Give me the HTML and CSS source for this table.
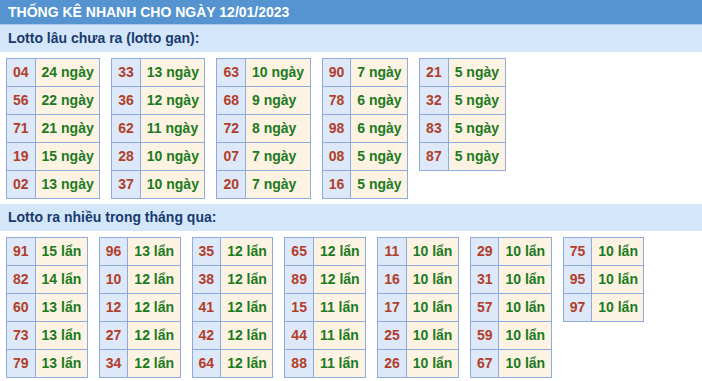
FILE: index.html
```html
<!DOCTYPE html>
<html lang="vi">
<head>
<meta charset="utf-8">
<link rel="stylesheet" href="styles.css">
</head>
<body>
<div class="title">THỐNG KÊ NHANH CHO NGÀY 12/01/2023</div>
<div class="band">Lotto lâu chưa ra (lotto gan):</div>
<div class="tables first">
  <table><tr><td class="n">04</td><td class="v">24 ngày</td></tr><tr><td class="n">56</td><td class="v">22 ngày</td></tr><tr><td class="n">71</td><td class="v">21 ngày</td></tr><tr><td class="n">19</td><td class="v">15 ngày</td></tr><tr><td class="n">02</td><td class="v">13 ngày</td></tr></table>
  <table><tr><td class="n">33</td><td class="v">13 ngày</td></tr><tr><td class="n">36</td><td class="v">12 ngày</td></tr><tr><td class="n">62</td><td class="v">11 ngày</td></tr><tr><td class="n">28</td><td class="v">10 ngày</td></tr><tr><td class="n">37</td><td class="v">10 ngày</td></tr></table>
  <table><tr><td class="n">63</td><td class="v">10 ngày</td></tr><tr><td class="n">68</td><td class="v">9 ngày</td></tr><tr><td class="n">72</td><td class="v">8 ngày</td></tr><tr><td class="n">07</td><td class="v">7 ngày</td></tr><tr><td class="n">20</td><td class="v">7 ngày</td></tr></table>
  <table><tr><td class="n">90</td><td class="v">7 ngày</td></tr><tr><td class="n">78</td><td class="v">6 ngày</td></tr><tr><td class="n">98</td><td class="v">6 ngày</td></tr><tr><td class="n">08</td><td class="v">5 ngày</td></tr><tr><td class="n">16</td><td class="v">5 ngày</td></tr></table>
  <table><tr><td class="n">21</td><td class="v">5 ngày</td></tr><tr><td class="n">32</td><td class="v">5 ngày</td></tr><tr><td class="n">83</td><td class="v">5 ngày</td></tr><tr><td class="n">87</td><td class="v">5 ngày</td></tr></table>
</div>
<div class="band">Lotto ra nhiều trong tháng qua:</div>
<div class="tables">
  <table><tr><td class="n">91</td><td class="v">15 lẩn</td></tr><tr><td class="n">82</td><td class="v">14 lẩn</td></tr><tr><td class="n">60</td><td class="v">13 lẩn</td></tr><tr><td class="n">73</td><td class="v">13 lẩn</td></tr><tr><td class="n">79</td><td class="v">13 lẩn</td></tr></table>
  <table><tr><td class="n">96</td><td class="v">13 lẩn</td></tr><tr><td class="n">10</td><td class="v">12 lẩn</td></tr><tr><td class="n">12</td><td class="v">12 lẩn</td></tr><tr><td class="n">27</td><td class="v">12 lẩn</td></tr><tr><td class="n">34</td><td class="v">12 lẩn</td></tr></table>
  <table><tr><td class="n">35</td><td class="v">12 lẩn</td></tr><tr><td class="n">38</td><td class="v">12 lẩn</td></tr><tr><td class="n">41</td><td class="v">12 lẩn</td></tr><tr><td class="n">42</td><td class="v">12 lẩn</td></tr><tr><td class="n">64</td><td class="v">12 lẩn</td></tr></table>
  <table><tr><td class="n">65</td><td class="v">12 lẩn</td></tr><tr><td class="n">89</td><td class="v">12 lẩn</td></tr><tr><td class="n">15</td><td class="v">11 lẩn</td></tr><tr><td class="n">44</td><td class="v">11 lẩn</td></tr><tr><td class="n">88</td><td class="v">11 lẩn</td></tr></table>
  <table><tr><td class="n">11</td><td class="v">10 lẩn</td></tr><tr><td class="n">16</td><td class="v">10 lẩn</td></tr><tr><td class="n">17</td><td class="v">10 lẩn</td></tr><tr><td class="n">25</td><td class="v">10 lẩn</td></tr><tr><td class="n">26</td><td class="v">10 lẩn</td></tr></table>
  <table><tr><td class="n">29</td><td class="v">10 lẩn</td></tr><tr><td class="n">31</td><td class="v">10 lẩn</td></tr><tr><td class="n">57</td><td class="v">10 lẩn</td></tr><tr><td class="n">59</td><td class="v">10 lẩn</td></tr><tr><td class="n">67</td><td class="v">10 lẩn</td></tr></table>
  <table><tr><td class="n">75</td><td class="v">10 lẩn</td></tr><tr><td class="n">95</td><td class="v">10 lẩn</td></tr><tr><td class="n">97</td><td class="v">10 lẩn</td></tr></table>
</div>
</body>
</html>
```
FILE: styles.css
```css
html, body {
  margin: 0;
  padding: 0;
  background: #ffffff;
  font-family: "Liberation Sans", Arial, sans-serif;
  font-size: 14px;
  font-weight: bold;
}
.title {
  height: 24px;
  line-height: 25px;
  padding-left: 8px;
  background: #5594d0;
  color: #ffffff;
  border-bottom: 1px solid #a9c9ea;
}
.band {
  height: 27px;
  line-height: 27px;
  padding-left: 8px;
  background: #d4e7fa;
  color: #1a3a6e;
}
.tables {
  display: flex;
  align-items: flex-start;
  gap: 11px;
  padding: 6px 0 0 6px;
}
.tables.first {
  padding-bottom: 5px;
}
table {
  border-collapse: collapse;
}
td {
  border: 1px solid #8faadc;
  height: 27px;
  line-height: 27px;
  white-space: nowrap;
}
td.n {
  padding: 0 6px;
  background: #dde9f8;
  color: #b23e2a;
  text-align: center;
}
td.v {
  padding: 0 5.5px 0 6px;
  background: #fdf3e2;
  color: #1c7a22;
}
```
